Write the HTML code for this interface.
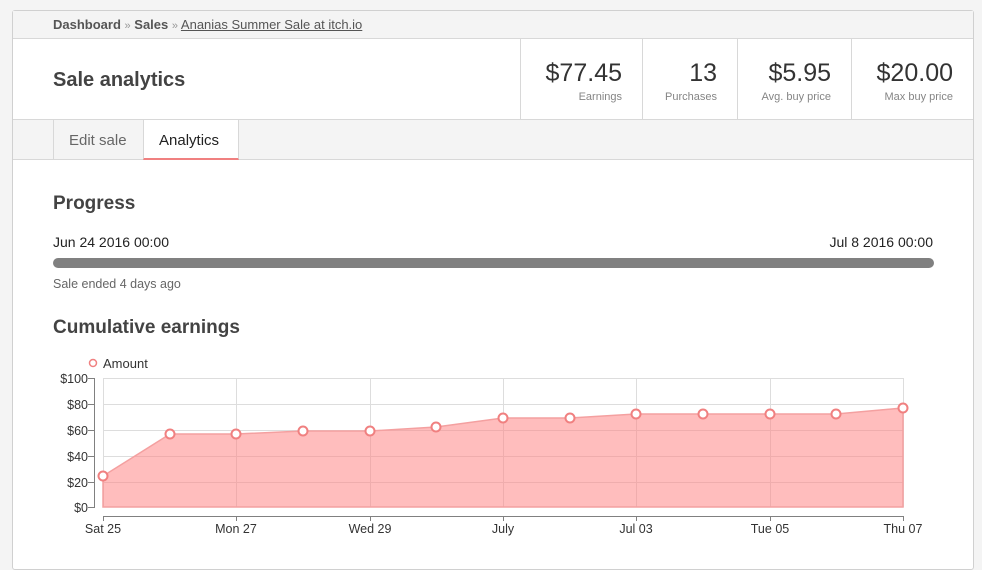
<!DOCTYPE html>
<html><head><meta charset="utf-8"><style>
*{margin:0;padding:0;box-sizing:border-box}
body{width:982px;height:555px;background:#f4f4f4;font-family:"Liberation Sans",sans-serif;color:#434343;position:relative;overflow:hidden}
.card{position:absolute;left:12px;top:10px;width:962px;height:560px;background:#fff;border:1px solid #d0d0d0;border-radius:3px}
.a{position:absolute;white-space:nowrap}
.bc{left:0;top:0;width:960px;height:28px;background:#f4f4f4;border-bottom:1px solid #d8d8d8}
.tabs{left:0;top:108px;width:960px;height:41px;background:#f4f4f4;border-top:1px solid #d8d8d8;border-bottom:1px solid #d8d8d8}
.stat{top:28px;height:80px;border-left:1px solid #d8d8d8}
.sv{font-size:25px;color:#333;position:absolute;right:20px;top:20px}
.sl{font-size:11px;color:#858585;position:absolute;right:20px;top:52px}
</style></head><body>
<div class="card">
 <div class="a bc"><span class="a" style="left:40px;top:6px;font-size:13px;color:#555"><b>Dashboard</b> <span style="color:#999;font-size:11px">»</span> <b>Sales</b> <span style="color:#999;font-size:11px">»</span> <span style="text-decoration:underline">Ananias Summer Sale at itch.io</span></span></div>
 <div class="a" style="left:40px;top:58px;font-size:20px;font-weight:bold;color:#434343">Sale analytics</div>
 <div class="a stat" style="left:507px;width:122px"><span class="sv">$77.45</span><span class="sl">Earnings</span></div>
 <div class="a stat" style="left:629px;width:95px"><span class="sv">13</span><span class="sl">Purchases</span></div>
 <div class="a stat" style="left:724px;width:114px"><span class="sv">$5.95</span><span class="sl">Avg. buy price</span></div>
 <div class="a stat" style="left:838px;width:122px"><span class="sv">$20.00</span><span class="sl">Max buy price</span></div>
 <div class="a tabs">
  <div class="a" style="left:40px;top:0;width:90px;height:39px;border-left:1px solid #d8d8d8;font-size:15px;color:#666;padding:12px 0 0 15px">Edit sale</div>
  <div class="a" style="left:130px;top:0;width:96px;height:40px;background:#fff;border-left:1px solid #d8d8d8;border-right:1px solid #d8d8d8;border-bottom:2px solid #f08080;font-size:15px;color:#222;padding:12px 0 0 15px">Analytics</div>
 </div>
 <div class="a" style="left:40px;top:182px;font-size:19px;font-weight:bold">Progress</div>
 <div class="a" style="left:40px;top:223px;font-size:14px;color:#222">Jun 24 2016 00:00</div>
 <div class="a" style="right:40px;top:223px;font-size:14px;color:#222">Jul 8 2016 00:00</div>
 <div class="a" style="left:40px;top:247px;width:881px;height:10px;border-radius:5px;background:#808080"></div>
 <div class="a" style="left:40px;top:266px;font-size:12.5px;color:#666">Sale ended 4 days ago</div>
 <div class="a" style="left:40px;top:306px;font-size:19px;font-weight:bold">Cumulative earnings</div>
</div>
<svg class="a" style="left:0;top:0" width="982" height="555" font-family="Liberation Sans, sans-serif" font-size="12" fill="#333">
 <circle cx="93" cy="363" r="3.5" fill="#fff" stroke="#f08080" stroke-width="1.5"/>
 <text x="103" y="368" font-size="13">Amount</text>
 <g stroke="#ddd" stroke-width="1">
  <line x1="103" y1="378.5" x2="903" y2="378.5"/><line x1="103" y1="404.5" x2="903" y2="404.5"/><line x1="103" y1="430.5" x2="903" y2="430.5"/><line x1="103" y1="456.5" x2="903" y2="456.5"/><line x1="103" y1="482.5" x2="903" y2="482.5"/>
  <line x1="103.5" y1="378" x2="103.5" y2="507"/><line x1="236.5" y1="378" x2="236.5" y2="507"/><line x1="370.5" y1="378" x2="370.5" y2="507"/><line x1="503.5" y1="378" x2="503.5" y2="507"/><line x1="636.5" y1="378" x2="636.5" y2="507"/><line x1="770.5" y1="378" x2="770.5" y2="507"/><line x1="903.5" y1="378" x2="903.5" y2="507"/>
 </g>
 <polygon points="103,507 103,476 170,434 236,434 303,431 370,431 436,427 503,418 570,418 636,414 703,414 770,414 836,414 903,408 903,507" fill="rgba(255,128,128,0.52)" stroke="#f4a0a0" stroke-width="1.5"/>
 <g stroke="#808080" stroke-width="1" fill="none">
  <path d="M94.5 378V508M88 378.5h7M88 404.5h7M88 430.5h7M88 456.5h7M88 482.5h7M88 507.5h7"/>
  <path d="M103 516.5H903M103.5 516v5M236.5 516v5M370.5 516v5M503.5 516v5M636.5 516v5M770.5 516v5M903.5 516v5"/>
 </g>
 <g text-anchor="end" font-size="12.5"><text x="88" y="383">$100</text><text x="88" y="409">$80</text><text x="88" y="435">$60</text><text x="88" y="461">$40</text><text x="88" y="487">$20</text><text x="88" y="512">$0</text></g>
 <g text-anchor="middle" font-size="12.5"><text x="103" y="533">Sat 25</text><text x="236" y="533">Mon 27</text><text x="370" y="533">Wed 29</text><text x="503" y="533">July</text><text x="636" y="533">Jul 03</text><text x="770" y="533">Tue 05</text><text x="903" y="533">Thu 07</text></g>
 <g fill="#fff" stroke="#f08080" stroke-width="2">
  <circle cx="103" cy="476" r="4.5"/><circle cx="170" cy="434" r="4.5"/><circle cx="236" cy="434" r="4.5"/><circle cx="303" cy="431" r="4.5"/><circle cx="370" cy="431" r="4.5"/><circle cx="436" cy="427" r="4.5"/><circle cx="503" cy="418" r="4.5"/><circle cx="570" cy="418" r="4.5"/><circle cx="636" cy="414" r="4.5"/><circle cx="703" cy="414" r="4.5"/><circle cx="770" cy="414" r="4.5"/><circle cx="836" cy="414" r="4.5"/><circle cx="903" cy="408" r="4.5"/>
 </g>
</svg>
</body></html>
